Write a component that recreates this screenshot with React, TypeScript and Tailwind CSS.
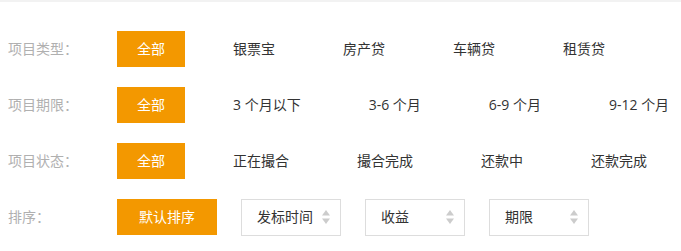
import React from "react";

const rows: { label: string; items: string[] }[] = [
  { label: "项目类型：", items: ["银票宝", "房产贷", "车辆贷", "租赁贷"] },
  { label: "项目期限：", items: ["3 个月以下", "3-6 个月", "6-9 个月", "9-12 个月"] },
  { label: "项目状态：", items: ["正在撮合", "撮合完成", "还款中", "还款完成"] },
];

function Arrows() {
  return (
    <svg width="8" height="14" viewBox="0 0 8 14" className="shrink-0">
      <path d="M4 0 L8 5.5 L0 5.5 Z" fill="#cccccc" />
      <path d="M0 8.5 L8 8.5 L4 14 Z" fill="#cccccc" />
    </svg>
  );
}

export default function App() {
  return (
    <div
      className="w-[681px] h-[251px] bg-white border-t-2 border-[#f2f2f2] overflow-hidden"
      style={{ fontFamily: '"Open Sans", "Noto Sans CJK SC", sans-serif' }}
    >
      <div className="pt-[29px] pl-2 flex flex-col gap-5">
        {rows.map((r) => (
          <div key={r.label} className="flex items-center h-9 whitespace-nowrap">
            <div className="w-[109px] shrink-0 text-sm text-[#b0b0b0]">{r.label}</div>
            <div className="flex gap-7 items-center shrink-0">
              <div className="shrink-0 px-5 h-9 leading-9 bg-[#f39800] text-white text-sm">全部</div>
              {r.items.map((it) => (
                <div key={it} className="shrink-0 px-5 h-9 leading-9 text-sm text-[#333] whitespace-nowrap">
                  {it}
                </div>
              ))}
            </div>
          </div>
        ))}
        <div className="flex items-center h-9">
          <div className="w-[109px] shrink-0 text-sm text-[#b0b0b0]">排序：</div>
          <div className="flex gap-6 items-start">
            <div className="w-[100px] h-9 leading-9 text-center bg-[#f39800] text-white text-sm">默认排序</div>
            {["发标时间", "收益", "期限"].map((s) => (
              <div
                key={s}
                className="w-[100px] h-[37px] border border-[#dddddd] flex items-center justify-between pl-[15px] pr-[10px] text-sm text-[#333]"
              >
                <span>{s}</span>
                <Arrows />
              </div>
            ))}
          </div>
        </div>
      </div>
    </div>
  );
}
